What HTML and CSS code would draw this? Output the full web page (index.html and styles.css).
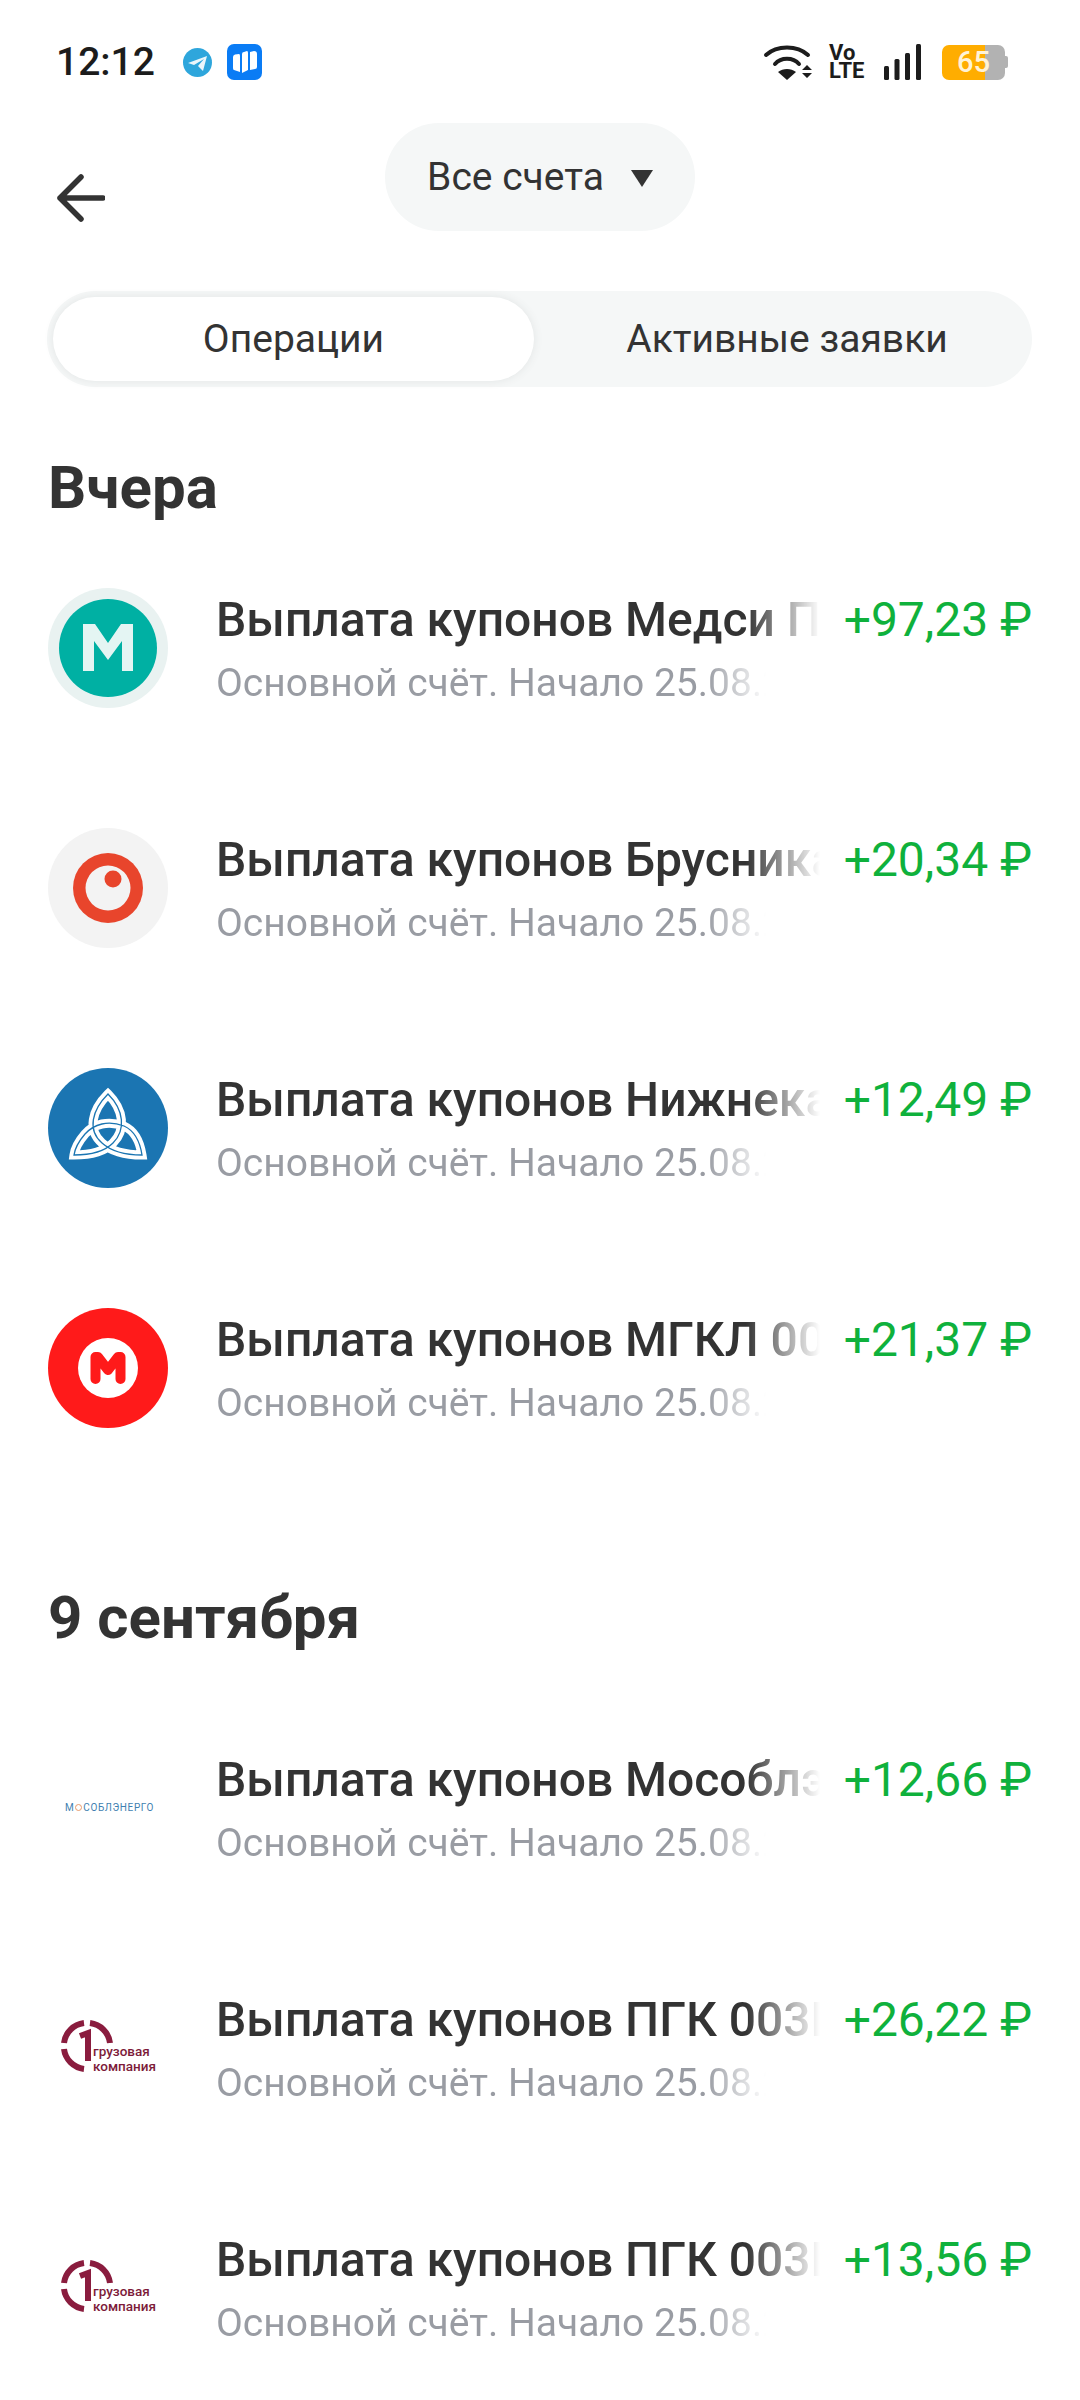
FILE: index.html
```html
<!DOCTYPE html>
<html lang="ru">
<head>
    <meta charset="UTF-8">
    <meta name="viewport" content="width=device-width, initial-scale=1.0">
    <title>Операции</title>
    <link rel="stylesheet" href="styles.css">
</head>
<body>
    <!-- Статус-бар -->
    <div class="status-bar">
        <div class="status-left">
            <span class="time">12:12</span>
            <svg class="ico-telegram" width="29" height="29" viewBox="0 0 29 29">
                <circle cx="14.5" cy="14.5" r="14.5" fill="#2ea6dc"/>
                <path d="M5 15 L24 8 L20 23 L15 18 L21 11 L11 17 Z" fill="#eaf6fb"/>
            </svg>
            <svg class="ico-app" width="35" height="36" viewBox="0 0 35 36">
                <rect width="35" height="36" rx="7" fill="#0a7cf5"/>
                <path d="M6 13 Q6 11 8 10.500 L12 10 Q13 10 13 12 V28 L7 26 Q6 26 6 24 Z M15 10 Q15 8 17 8 L20 7 Q21 7 21 9 V26 L15 29 Z M23 8 L27 7 Q30 7 30 10 V23 Q30 25 28 25 L23 26 Z" fill="#fff"/>
            </svg>
        </div>
        <div class="status-right">
            <svg width="50" height="38" viewBox="0 0 50 38">
                <path d="M3 12 C14 2 34 2 45 12" fill="none" stroke="#1c1c1c" stroke-width="4" stroke-linecap="round"/>
                <path d="M12 21 C18 14 30 14 36 21" fill="none" stroke="#1c1c1c" stroke-width="4" stroke-linecap="round"/>
                <path d="M24 37 L15 29 C20 25 28 25 33 29 Z" fill="#1c1c1c"/>
                <path d="M44 22 L49 27 H39 Z M39 30 H49 L44 35 Z" fill="#1c1c1c"/>
            </svg>
            <div class="volte"><span>Vo</span><span>LTE</span></div>
            <svg width="37" height="37" viewBox="0 0 37 37">
                <rect x="0" y="22" width="5" height="14" rx="1.5" fill="#1c1c1c"/>
                <rect x="10.500" y="15" width="5" height="21" rx="1.5" fill="#1c1c1c"/>
                <rect x="21" y="9" width="5" height="27" rx="1.5" fill="#1c1c1c"/>
                <rect x="32" y="0" width="5" height="36" rx="1.5" fill="#1c1c1c"/>
            </svg>
            <div class="battery"><div class="battery-level">65</div><div class="battery-cap"></div></div>
        </div>
    </div>

    <header class="top">
        <svg class="back" width="48" height="48" viewBox="0 0 48 48">
            <path d="M24 3 L3 24 L24 45 M3 24 H46" fill="none" stroke="#333" stroke-width="5.500" stroke-linecap="round" stroke-linejoin="round"/>
        </svg>
        <button class="accounts">Все счета<span class="tri"></span></button>
    </header>

    <div class="tabs">
        <div class="tab active">Операции</div>
        <div class="tab">Активные заявки</div>
    </div>

    <main>
        <h2 class="day">Вчера</h2>

        <div class="op">
            <svg class="logo" viewBox="0 0 120 120">
                <circle cx="60" cy="60" r="60" fill="#e9f2f1"/>
                <circle cx="60" cy="60" r="49" fill="#00b0a3"/>
                <path d="M35 83 V36 H47 L60 55 L73 36 H85 V83 H74 V53 L60 72 L46 53 V83 Z" fill="#e4f5f3"/>
            </svg>
            <div class="op-text">
                <div class="op-title">Выплата купонов Медси ПАО</div>
                <div class="op-sub">Основной счёт. Начало 25.08.2025</div>
            </div>
            <div class="op-sum">+97,23 ₽</div>
        </div>

        <div class="op">
            <svg class="logo" viewBox="0 0 120 120">
                <circle cx="60" cy="60" r="60" fill="#f3f3f3"/>
                <circle cx="60" cy="60" r="35" fill="#e8452c"/>
                <circle cx="60" cy="60" r="22.500" fill="#f3f3f3"/>
                <circle cx="65" cy="51" r="8.500" fill="#e8452c"/>
            </svg>
            <div class="op-text">
                <div class="op-title">Выплата купонов Брусника</div>
                <div class="op-sub">Основной счёт. Начало 25.08.2025</div>
            </div>
            <div class="op-sum">+20,34 ₽</div>
        </div>

        <div class="op">
            <svg class="logo" viewBox="0 0 120 120">
                <circle cx="60" cy="60" r="60" fill="#1b75b2"/>
                <path class="knot-w" d="M60 26 C44 42 39 62 54 75 C 64 84 80 87 94 87 C 92 74 87 63 76 58 C 60 52 46 56 37 66 C 31 73 27 80 26 87 C 40 87 55 85 65 75 C 78 62 76 42 60 26 Z"/>
                <path class="knot-b" d="M60 26 C44 42 39 62 54 75 C 64 84 80 87 94 87 C 92 74 87 63 76 58 C 60 52 46 56 37 66 C 31 73 27 80 26 87 C 40 87 55 85 65 75 C 78 62 76 42 60 26 Z"/>
            </svg>
            <div class="op-text">
                <div class="op-title">Выплата купонов Нижнекамск</div>
                <div class="op-sub">Основной счёт. Начало 25.08.2025</div>
            </div>
            <div class="op-sum">+12,49 ₽</div>
        </div>

        <div class="op">
            <svg class="logo" viewBox="0 0 120 120">
                <circle cx="60" cy="60" r="60" fill="#ff1a1a"/>
                <circle cx="60" cy="60" r="30" fill="#fff"/>
                <path d="M48.500 71 V49 H51 L61 62 L71 49 H73.500 V71" transform="translate(-1 0)" fill="none" stroke="#ff1a1a" stroke-width="10" stroke-linecap="round" stroke-linejoin="round"/>
            </svg>
            <div class="op-text">
                <div class="op-title">Выплата купонов МГКЛ 002Р</div>
                <div class="op-sub">Основной счёт. Начало 25.08.2025</div>
            </div>
            <div class="op-sum">+21,37 ₽</div>
        </div>

        <h2 class="day day-next">9 сентября</h2>

        <div class="op">
            <div class="logo logo-text">
                <span class="mos">М<i class="mos-sun"></i>СОБЛЭНЕРГО</span>
            </div>
            <div class="op-text">
                <div class="op-title">Выплата купонов Мособлэнерго</div>
                <div class="op-sub">Основной счёт. Начало 25.08.2025</div>
            </div>
            <div class="op-sum">+12,66 ₽</div>
        </div>

        <div class="op">
            <div class="logo logo-text">
                <svg class="pgk-ring" width="52" height="52" viewBox="0 0 52 52">
                    <path d="M23 3 A23 23 0 0 0 3 23 M3 29 A23 23 0 0 0 23 49 M29 3 A23 23 0 0 1 49 23" fill="none" stroke="#8a1c3e" stroke-width="6"/>
                    <path d="M19 16 L27 13 V41" fill="none" stroke="#8a1c3e" stroke-width="6"/>
                </svg>
                <span class="pgk">грузовая<br>компания</span>
            </div>
            <div class="op-text">
                <div class="op-title">Выплата купонов ПГК 003Р</div>
                <div class="op-sub">Основной счёт. Начало 25.08.2025</div>
            </div>
            <div class="op-sum">+26,22 ₽</div>
        </div>

        <div class="op">
            <div class="logo logo-text">
                <svg class="pgk-ring" width="52" height="52" viewBox="0 0 52 52">
                    <path d="M23 3 A23 23 0 0 0 3 23 M3 29 A23 23 0 0 0 23 49 M29 3 A23 23 0 0 1 49 23" fill="none" stroke="#8a1c3e" stroke-width="6"/>
                    <path d="M19 16 L27 13 V41" fill="none" stroke="#8a1c3e" stroke-width="6"/>
                </svg>
                <span class="pgk">грузовая<br>компания</span>
            </div>
            <div class="op-text">
                <div class="op-title">Выплата купонов ПГК 003Р</div>
                <div class="op-sub">Основной счёт. Начало 25.08.2025</div>
            </div>
            <div class="op-sum">+13,56 ₽</div>
        </div>
    </main>
</body>
</html>
```

FILE: styles.css
```css
html, body {
    margin: 0;
    padding: 0;
}

body {
    width: 1080px;
    height: 2400px;
    overflow: hidden;
    background-color: #fff;
    font-family: Roboto, "Noto Sans", sans-serif;
    color: #333;
}

/* Статус-бар */
.status-bar {
    display: flex;
    justify-content: space-between;
    align-items: center;
    height: 36px;
    padding: 44px 72px 0 56px;
}

.status-left {
    display: flex;
    align-items: center;
}

.time {
    font-size: 39px;
    font-weight: 500;
    color: #1c1c1c;
    margin-right: 28px;
}

.ico-app {
    margin-left: 15px;
}

.status-right {
    display: flex;
    align-items: center;
}

.volte {
    display: flex;
    flex-direction: column;
    width: 34px;
    margin: 0 21px 0 16px;
    font-size: 22px;
    line-height: 18px;
    font-weight: 700;
    color: #1c1c1c;
}

.battery {
    display: flex;
    align-items: center;
    margin-left: 21px;
}

.battery-level {
    width: 63px;
    height: 35px;
    border-radius: 7px;
    background: linear-gradient(to right, #ffad00 0, #ffad00 43px, #b2b2b2 43px);
    color: #fff3d6;
    font-size: 29px;
    font-weight: 500;
    line-height: 35px;
    text-align: center;
}

.battery-cap {
    width: 3px;
    height: 12px;
    background-color: #b2b2b2;
    border-radius: 0 2px 2px 0;
}

/* Шапка */
.top {
    display: flex;
    justify-content: center;
    position: relative;
    margin-top: 43px;
    height: 108px;
}

.back {
    position: absolute;
    left: 57px;
    top: 51px;
}

.accounts {
    display: flex;
    align-items: center;
    justify-content: center;
    width: 310px;
    height: 108px;
    padding: 0;
    border: none;
    border-radius: 54px;
    background-color: #f5f7f7;
    color: #333;
    font-family: inherit;
    font-size: 39px;
}

.tri {
    width: 0;
    height: 0;
    margin: 3px 0 0 27px;
    border-left: 11px solid transparent;
    border-right: 11px solid transparent;
    border-top: 17px solid #333;
}

/* Вкладки */
.tabs {
    display: flex;
    margin: 60px 48px 0 47px;
    height: 84px;
    padding: 6px;
    background-color: #f5f7f7;
    border-radius: 48px;
}

.tab {
    flex: 1;
    display: flex;
    align-items: center;
    justify-content: center;
    font-size: 39px;
    border-radius: 42px;
    color: #333;
}

.tab.active {
    flex: 0 0 481px;
    background-color: #fff;
    box-shadow: 0 0 10px #e2e5e5;
}

.tab:last-child {
    padding-left: 14px;
}

/* Список операций */
main {
    padding: 0 48px;
}

.day {
    margin: 71px 0 0;
    font-size: 60px;
    line-height: 60px;
    font-weight: 700;
    color: #333;
}

.day-next {
    margin-top: 160px;
}

.op {
    display: flex;
    align-items: flex-start;
    height: 120px;
    margin-top: 120px;
}

.day + .op {
    margin-top: 70px;
}

.day-next + .op {
    margin-top: 100px;
}

.logo {
    flex: 0 0 120px;
    width: 120px;
    height: 120px;
}

.logo-text {
    position: relative;
}

.knot-w {
    fill: none;
    stroke: #fff;
    stroke-width: 9;
}

.knot-b {
    fill: none;
    stroke: #1b75b2;
    stroke-width: 1.3;
}

.op-text {
    width: 604px;
    margin: 2px 0 0 48px;
    overflow: hidden;
    white-space: nowrap;
}

.op-title {
    width: 604px;
    font-size: 48px;
    font-weight: 500;
    line-height: 60px;
    overflow: hidden;
    -webkit-mask-image: linear-gradient(to right, #000 530px, transparent 604px);
    mask-image: linear-gradient(to right, #000 530px, transparent 604px);
}

.op-sub {
    width: 560px;
    font-size: 39px;
    line-height: 44px;
    margin-top: 11px;
    color: #999ca3;
    overflow: hidden;
    -webkit-mask-image: linear-gradient(to right, #000 490px, transparent 550px);
    mask-image: linear-gradient(to right, #000 490px, transparent 550px);
}

.op-sum {
    flex: 1;
    margin-top: 2px;
    font-size: 48px;
    line-height: 60px;
    text-align: right;
    white-space: nowrap;
    color: #0fb13c;
}

/* Логотипы из букв */
.mos {
    position: absolute;
    left: 17px;
    top: 54px;
    font-size: 10px;
    letter-spacing: 0.6px;
    color: #3f7fb0;
    white-space: nowrap;
}

.mos-sun {
    display: inline-block;
    width: 7px;
    height: 7px;
    margin: 0 1px;
    border-radius: 50%;
    border: 1.5px solid #e89a6a;
    box-sizing: border-box;
}

.pgk-ring {
    position: absolute;
    left: 13px;
    top: 32px;
}

.pgk {
    position: absolute;
    left: 45px;
    top: 56px;
    font-size: 13.5px;
    line-height: 15px;
    font-weight: 500;
    color: #7d1b3a;
}
```
